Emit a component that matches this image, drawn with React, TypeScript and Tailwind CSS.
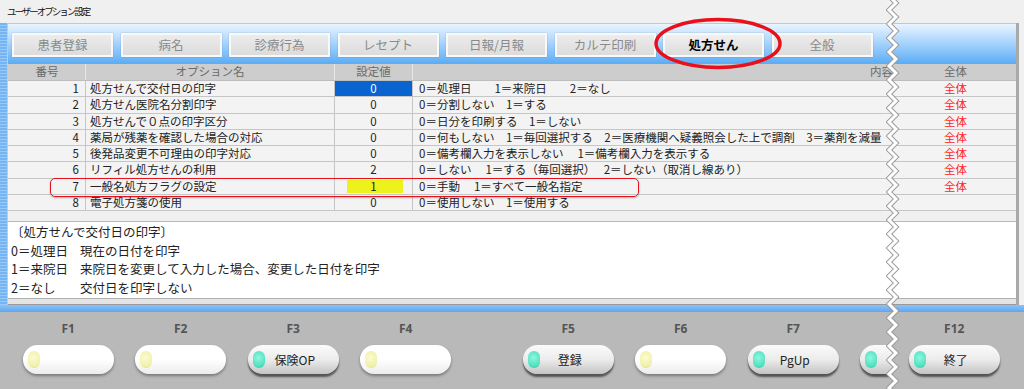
interface OptionRow {
  no: number
  name: string
  value: string
  content: string
  scope: boolean
  mark?: 'blue' | 'yellow'
}

const rows: OptionRow[] = [
  { no: 1, name: '処方せんで交付日の印字', value: '0', content: '0＝処理日　　1＝来院日　　2＝なし', scope: true, mark: 'blue' },
  { no: 2, name: '処方せん医院名分割印字', value: '0', content: '0＝分割しない　1＝する', scope: true },
  { no: 3, name: '処方せんで０点の印字区分', value: '0', content: '0＝日分を印刷する　1＝しない', scope: true },
  {
    no: 4,
    name: '薬局が残薬を確認した場合の対応',
    value: '0',
    content: '0＝何もしない　1＝毎回選択する　2＝医療機関へ疑義照会した上で調剤　3＝薬剤を減量',
    scope: true,
  },
  { no: 5, name: '後発品変更不可理由の印字対応', value: '0', content: '0＝備考欄入力を表示しない　 1＝備考欄入力を表示する', scope: true },
  { no: 6, name: 'リフィル処方せんの利用', value: '2', content: '0＝しない　 1＝する（毎回選択）　 2＝しない（取消し線あり）', scope: true },
  { no: 7, name: '一般名処方フラグの設定', value: '1', content: '0＝手動　 1＝すべて一般名指定', scope: true, mark: 'yellow' },
  { no: 8, name: '電子処方箋の使用', value: '0', content: '0＝使用しない　1＝使用する', scope: false },
]

const tabs = ['患者登録', '病名', '診療行為', 'レセプト', '日報/月報', 'カルテ印刷', '処方せん', '全般']

interface FKey {
  key: string
  label?: string
  on: boolean
  hideKey?: boolean
}

const leftKeys: FKey[][] = [
  [
    { key: 'F1', on: false },
    { key: 'F2', on: false },
    { key: 'F3', label: '保険OP', on: true },
    { key: 'F4', on: false },
  ],
  [
    { key: 'F5', label: '登録', on: true },
    { key: 'F6', on: false },
    { key: 'F7', label: 'PgUp', on: true },
    { key: 'F8', on: true, hideKey: true },
  ],
]

function FuncKey({ k }: { k: FKey }) {
  return (
    <div className="w-[112.5px] shrink-0 flex flex-col items-center pt-[10px]">
      <div className="h-[14px] leading-[14px] text-[12px] font-bold text-[#555]" style={{ fontFamily: '"Noto Sans", sans-serif' }}>
        {k.hideKey ? '' : k.key}
      </div>
      <div
        className={
          k.on
            ? 'relative mt-[9px] w-[91px] h-[29px] rounded-full bg-gradient-to-b from-[#fbfbfb] via-[#ececec] to-[#c4c4c4] shadow-[0_3px_2px_rgba(0,0,0,0.55)] flex items-center justify-center'
            : 'relative mt-[9px] w-[91px] h-[29px] rounded-full bg-gradient-to-b from-white via-white to-[#ececec] shadow-[0_2px_3px_rgba(0,0,0,0.35)] flex items-center justify-center'
        }
      >
        <span
          className={
            k.on
              ? 'absolute left-[5px] top-[6px] w-[12px] h-[17px] rounded-full bg-[radial-gradient(circle_at_45%_40%,#8ff7dc,#4fe0be_70%,#35b995)]'
              : 'absolute left-[5px] top-[6px] w-[12px] h-[17px] rounded-full bg-[radial-gradient(circle_at_45%_40%,#fbfbd0,#f0f0a8_70%,#cfcf86)]'
          }
        />
        {k.label && <span className="text-[12px] text-[#222] pl-[3px]">{k.label}</span>}
      </div>
    </div>
  )
}

export default function App() {
  const zig: string[] = []
  for (let y = -4, i = 0; y <= 396; y += 7, i++) zig.push(`${i % 2 ? 10 : 3},${y}`)
  const points = zig.join(' ')

  return (
    <div
      className="relative w-[1024px] h-[389px] overflow-hidden bg-[#f0f0f0] text-[#222]"
      style={{ fontFamily: '"Noto Sans CJK JP", "Noto Sans", sans-serif' }}
    >
      {/* title */}
      <div className="h-[23px] flex items-center pl-[7px] text-[9.5px] tracking-[-2px] text-[#111]">ユーザーオプション設定</div>

      {/* main frame */}
      <div className="flex h-[282px]">
        <div className="w-[8px] shrink-0 bg-[#74b4f3] border-r border-[#a8d2f8] bg-[repeating-linear-gradient(180deg,#74b4f3_0px,#74b4f3_2px,#9ccaf6_2px,#9ccaf6_3px)]" />
        <div className="w-[1011px] shrink-0 flex flex-col border-r-[3px] border-[#a9a9a9] bg-[#f0f0f0]">
          {/* tab bar */}
          <div className="h-[41px] border-t border-[#a6cff5] bg-gradient-to-b from-[#e9f5ff] to-[#58acf6] flex items-center pl-[4px] gap-[7.5px] pt-[2px]">
            {tabs.map(t => (
              <div
                key={t}
                className={
                  t === '処方せん'
                    ? 'w-[101px] h-[24px] shrink-0 border-2 border-[#f9f9f9] bg-gradient-to-b from-[#f0f0f0] to-[#dcdcdc] shadow-[0_0_1px_rgba(0,0,0,0.3)] flex items-center justify-center text-[12.5px] font-bold text-black'
                    : 'w-[101px] h-[24px] shrink-0 border-2 border-[#f9f9f9] bg-gradient-to-b from-[#ececec] to-[#dcdcdc] shadow-[0_0_1px_rgba(0,0,0,0.3)] flex items-center justify-center text-[12.5px] text-[#8a8a8a]'
                }
              >
                {t}
              </div>
            ))}
          </div>

          {/* table header */}
          <div className="flex h-[17px] pl-[1px] bg-[#cdcdcd] text-[11.5px] text-[#6a6a6a] border-b border-[#bdbdbd]">
            <div className="w-[77px] shrink-0 flex items-center justify-center border-r border-[#e6e6e6]">番号</div>
            <div className="w-[249px] shrink-0 flex items-center justify-center border-r border-[#e6e6e6]">オプション名</div>
            <div className="w-[78px] shrink-0 flex items-center justify-center border-r border-[#e6e6e6]">設定値</div>
            <div className="w-[482px] shrink-0 flex items-center justify-end pr-[2px]">内容</div>
            <div className="flex-1 flex items-center justify-center">全体</div>
          </div>

          {/* rows */}
          {rows.map(r => (
            <div key={r.no} className="flex h-[16.25px] pl-[1px] bg-[#f3f3f3] text-[11.5px] border-b border-[#c6c6c6]">
              <div className="w-[77px] shrink-0 flex items-center justify-end pr-[6px] border-r border-[#c6c6c6]">{r.no}</div>
              <div className="w-[249px] shrink-0 flex items-center pl-[4px] border-r border-[#c6c6c6] whitespace-nowrap">{r.name}</div>
              <div className="w-[78px] shrink-0 flex items-center justify-center border-r border-[#c6c6c6] relative">
                {r.mark === 'blue' && <div className="absolute inset-0 bg-[#0a64d0]" />}
                {r.mark === 'yellow' && <div className="absolute left-[12px] right-[9px] top-[1px] bottom-[1px] bg-[#eef21c]" />}
                <span className={r.mark === 'blue' ? 'relative text-white' : 'relative'}>{r.value}</span>
              </div>
              <div className="w-[482px] shrink-0 flex items-center pl-[6px] overflow-hidden whitespace-pre">{r.content}</div>
              <div className="flex-1 flex items-center justify-center text-[#ff2424]">{r.scope ? '全体' : ''}</div>
            </div>
          ))}
          <div className="h-[10px] bg-[#f0f0f0]" />

          {/* description */}
          <div className="h-[77px] bg-white border-t border-[#8cc4f2] pl-[3px] pt-[1px] text-[12.5px] leading-[18.5px] text-[#222]">
            <div>〔処方せんで交付日の印字〕</div>
            <div className="flex">
              <span className="w-[69px]">0＝処理日</span>
              <span>現在の日付を印字</span>
            </div>
            <div className="flex">
              <span className="w-[69px]">1＝来院日</span>
              <span>来院日を変更して入力した場合、変更した日付を印字</span>
            </div>
            <div className="flex">
              <span className="w-[69px]">2＝なし</span>
              <span>交付日を印字しない</span>
            </div>
          </div>
          <div className="flex-1 bg-[#e4e4e4] border-t border-[#b0b0b0] border-b border-b-[#9a9a9a]" />
        </div>
        <div className="flex-1 bg-[#f0f0f0]" />
      </div>

      {/* blue strip */}
      <div className="h-[7px] bg-gradient-to-b from-[#8cc2f8] to-[#5ea6f2]" />

      {/* function keys */}
      <div className="h-[77px] bg-[#b9b9b9] flex">
        <div className="w-[893px] shrink-0 overflow-hidden flex pl-[12px]">
          {leftKeys[0].map(k => (
            <FuncKey key={k.key} k={k} />
          ))}
          <div className="w-[50px] shrink-0" />
          {leftKeys[1].map(k => (
            <FuncKey key={k.key} k={k} />
          ))}
        </div>
        <div className="ml-[5px] flex">
          <FuncKey k={{ key: 'F12', label: '終了', on: true }} />
        </div>
      </div>

      {/* annotations */}
      <svg className="absolute left-0 top-0 pointer-events-none" width="1024" height="389">
        <ellipse cx="718" cy="43.5" rx="62" ry="24" fill="none" stroke="#e8101a" strokeWidth="3.5" />
      </svg>
      <div className="absolute left-[50px] top-[178px] w-[589px] h-[19px] rounded-[5px] border-[1.5px] border-[#e8101a] shadow-[0_1px_2px_rgba(0,0,0,0.25)] pointer-events-none" />

      {/* break mark */}
      <svg className="absolute left-[886px] top-0 pointer-events-none" width="14" height="389">
        <polyline points={points} fill="none" stroke="#9b9b9b" strokeWidth="5" strokeLinejoin="miter" />
        <polyline points={points} fill="none" stroke="#ffffff" strokeWidth="3" strokeLinejoin="miter" />
      </svg>
    </div>
  )
}
